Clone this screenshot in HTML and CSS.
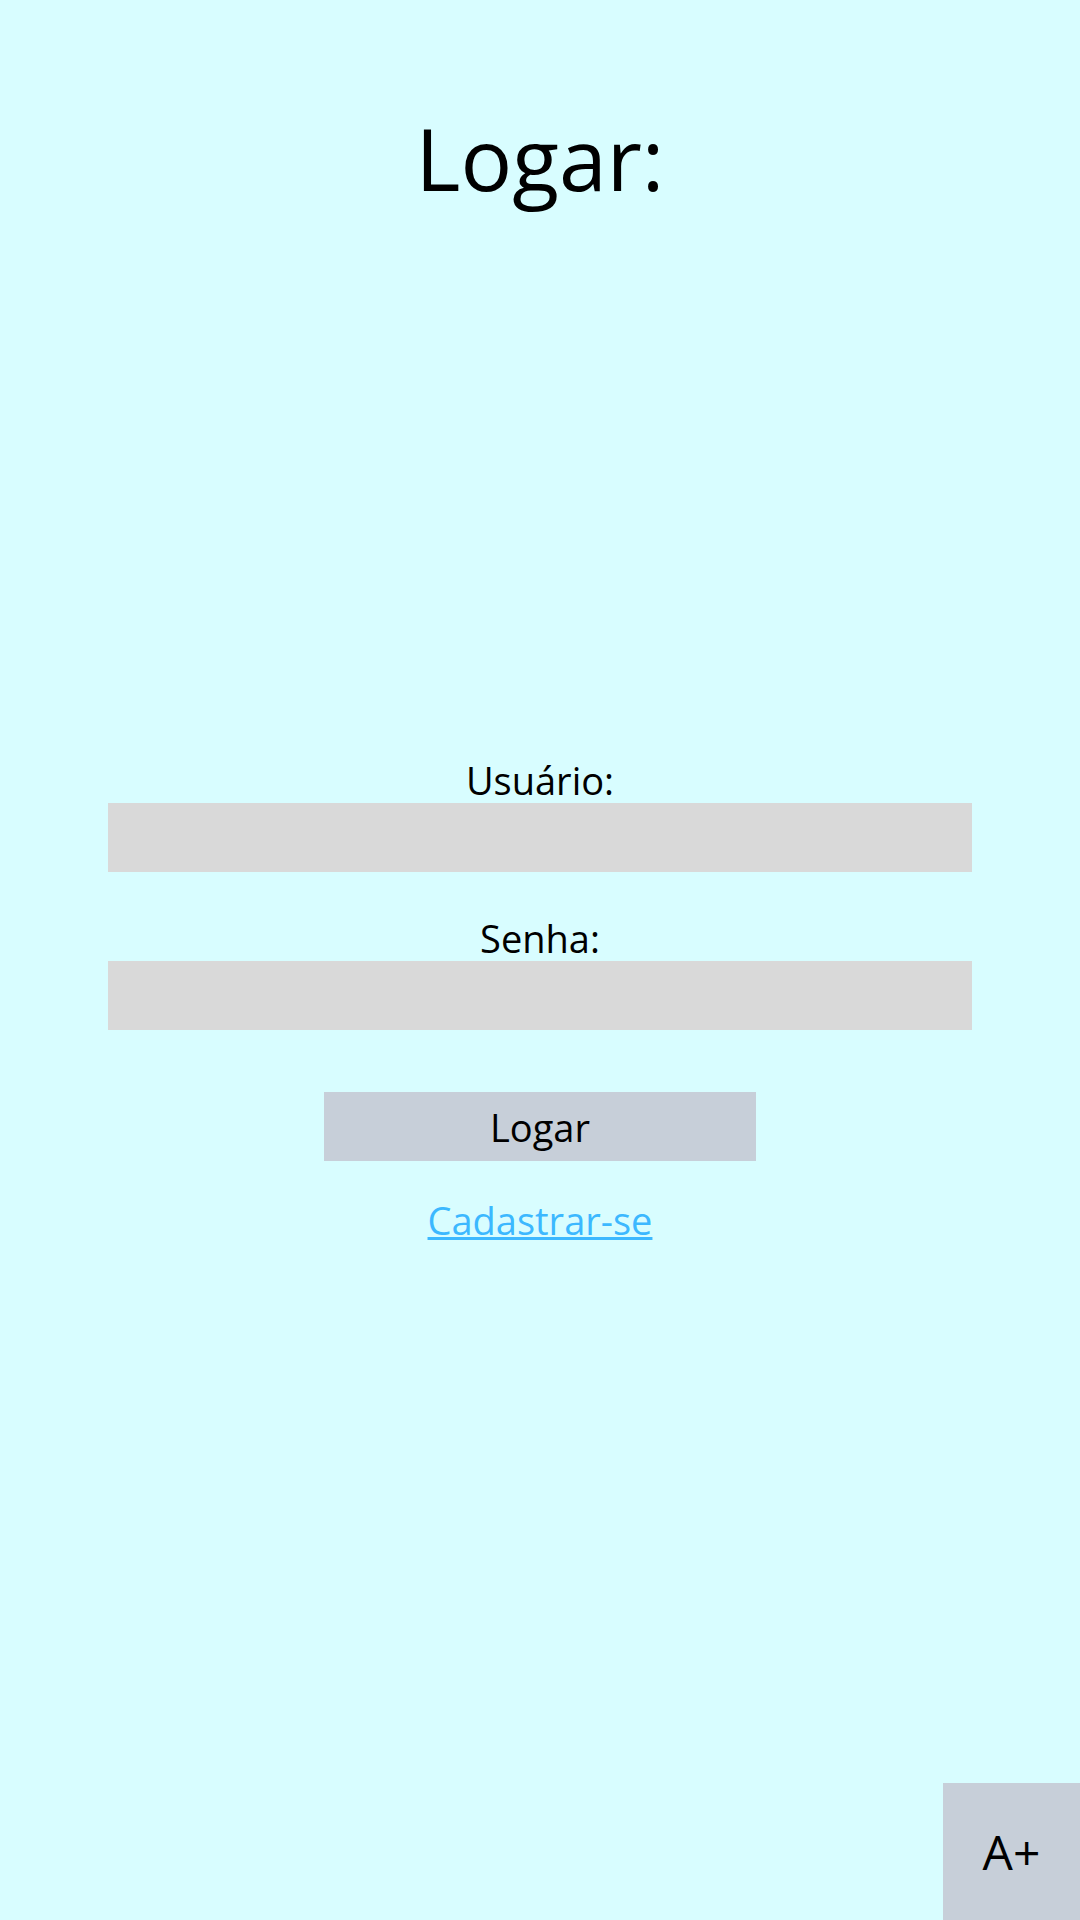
FILE: index.html
```html
<!DOCTYPE html>
<html lang="pt-BR">
<head>
<meta charset="utf-8">
<title>Logar</title>
<link rel="stylesheet" href="styles.css">
</head>
<body>
<main class="page">
  <h1 class="title">Logar:</h1>
  <form class="form">
    <label class="label" for="user">Usuário:</label>
    <input class="field" id="user" type="text">
    <label class="label label-second" for="pass">Senha:</label>
    <input class="field" id="pass" type="password">
    <button class="btn" type="button">Logar</button>
    <a class="link" href="#">Cadastrar-se</a>
  </form>
</main>
<button class="font-btn" type="button">A+</button>
</body>
</html>
```

FILE: styles.css
```css
html, body {
  margin: 0;
  padding: 0;
  height: 100%;
}
body {
  background: #d8fdff;
  font-family: "Open Sans", "Liberation Sans", sans-serif;
  color: #000;
}
.page {
  display: flex;
  flex-direction: column;
  align-items: center;
}
.title {
  margin: 99px 0 0 0;
  font-size: 86px;
  font-weight: 400;
  line-height: 117px;
}
.form {
  width: 100%;
  display: flex;
  flex-direction: column;
  align-items: center;
  margin-top: 542px;
}
.label {
  font-size: 38px;
  line-height: 45px;
}
.label-second {
  margin-top: 44px;
}
.field {
  box-sizing: border-box;
  width: 864px;
  height: 69px;
  border: none;
  margin: 0;
  padding: 0;
  background: #d9d9d9;
  outline: none;
}
.btn {
  margin-top: 62px;
  width: 432px;
  height: 69px;
  border: none;
  padding: 0;
  background: #c7cfd9;
  font-family: inherit;
  font-size: 38px;
  line-height: 52px;
  color: #000;
}
.link {
  margin-top: 33px;
  font-size: 38px;
  line-height: 52px;
  color: #3cb8ff;
  text-decoration: underline;
}
.font-btn {
  position: fixed;
  right: 0;
  bottom: 0;
  width: 137px;
  height: 137px;
  border: none;
  padding: 0;
  background: #c7cfd9;
  font-family: inherit;
  font-size: 48px;
  color: #000;
}
```
